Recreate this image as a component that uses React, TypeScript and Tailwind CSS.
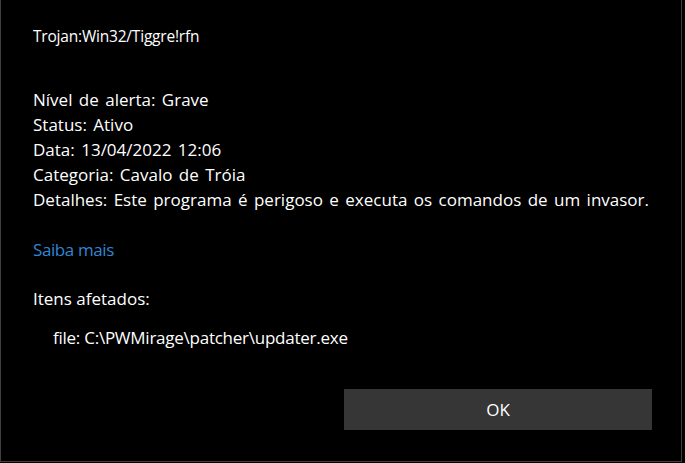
export default function App() {
  const rows = [
    ["Nível de alerta:", "Grave"],
    ["Status:", "Ativo"],
    ["Data:", "13/04/2022 12:06"],
    ["Categoria:", "Cavalo de Tróia"],
    ["Detalhes:", "Este programa é perigoso e executa os comandos de um invasor."],
  ];

  return (
    <div className="w-[685px] h-[463px] bg-black">
      <div
        className="w-[682px] h-[462px] border-l border-r border-b border-[#3f3f3f] text-white text-[17px] leading-[25px] flex flex-col"
        style={{ fontFamily: '"Open Sans", "Noto Sans", sans-serif' }}
      >
        <div className="pl-[32px] pt-[24px] text-[15.5px] tracking-[-0.2px]">Trojan:Win32/Tiggre!rfn</div>

        <div className="pl-[32px] pt-[38px] [word-spacing:2px]">
          {rows.map(([k, v]) => (
            <div key={k}>
              {k} {v}
            </div>
          ))}
        </div>

        <div className="pl-[32px] pt-[25px] text-[#2f86d4] tracking-[-0.4px]">Saiba mais</div>

        <div className="pl-[32px] pt-[24px]">Itens afetados:</div>
        <div className="pl-[52px] pt-[14px] tracking-[-0.25px]">file: C:\PWMirage\patcher\updater.exe</div>

        <div className="flex justify-end pr-[29px] pt-[39px]">
          <button className="w-[308px] h-[41px] bg-[#363636] text-white text-[17px]">OK</button>
        </div>
      </div>
    </div>
  );
}
